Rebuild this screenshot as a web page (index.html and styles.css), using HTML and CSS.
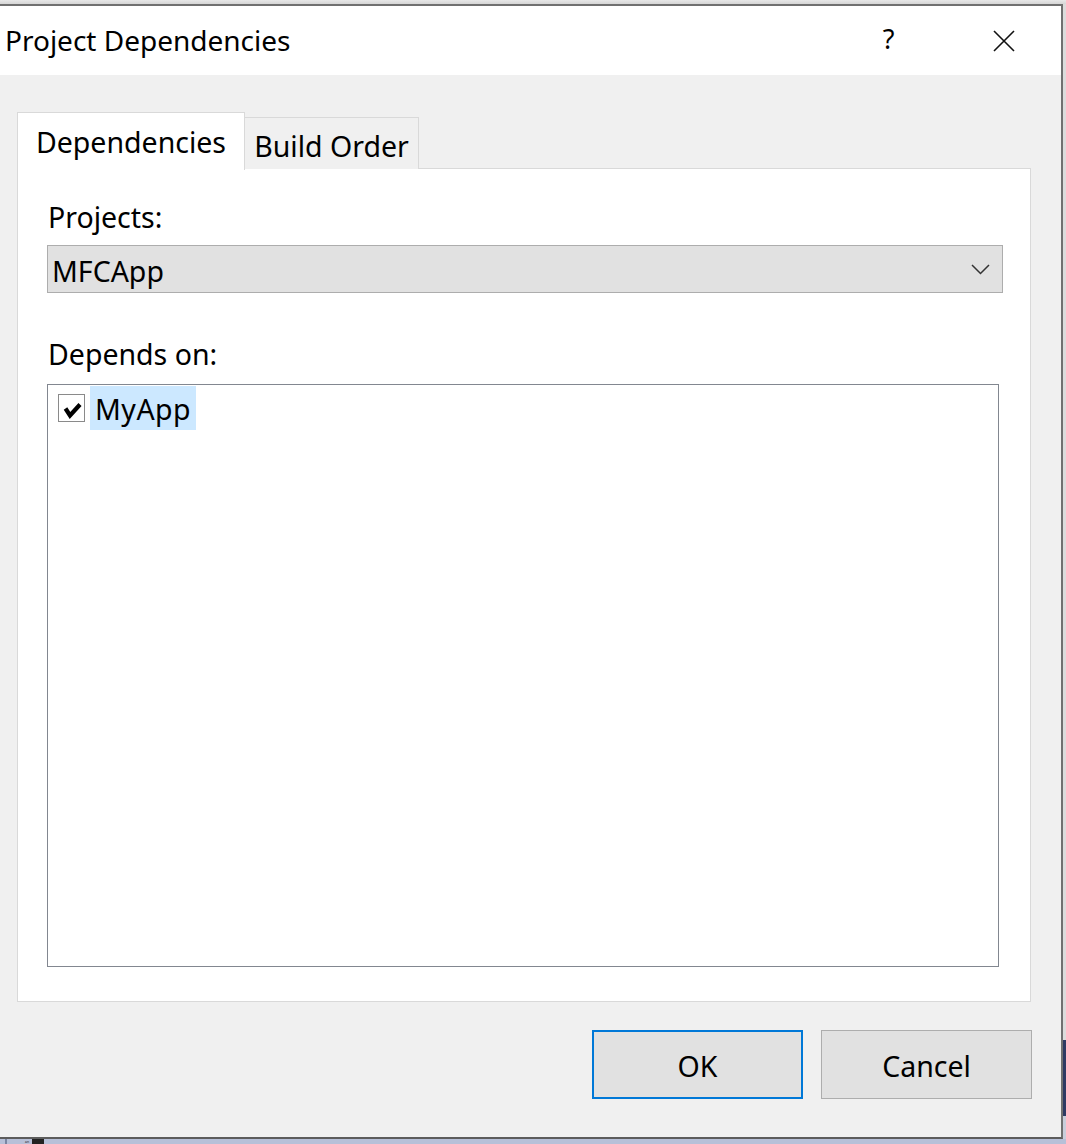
FILE: index.html
```html
<!DOCTYPE html>
<html>
<head>
<meta charset="utf-8">
<link rel="stylesheet" href="styles.css">
</head>
<body>
<div class="screen">
  <div class="top-strip"></div>
  <div class="mid">
    <div class="window">
      <div class="titlebar">
        <div class="title">Project Dependencies</div>
        <div class="caption-btn help">?</div>
        <div class="caption-btn close">
          <svg width="22" height="22" viewBox="0 0 22 22"><path d="M1 1 L21 21 M21 1 L1 21" stroke="#111" stroke-width="1.6" fill="none"/></svg>
        </div>
      </div>
      <div class="client">
        <div class="tabs">
          <div class="tab active">Dependencies</div>
          <div class="tab">Build Order</div>
        </div>
        <div class="panel">
          <div class="label label-projects">Projects:</div>
          <div class="combo">
            <span class="combo-text">MFCApp</span>
            <svg class="chevron" width="19" height="11" viewBox="0 0 19 11"><path d="M1 1 L9.5 9.5 L18 1" stroke="#333" stroke-width="1.5" fill="none"/></svg>
          </div>
          <div class="label label-depends">Depends on:</div>
          <div class="list">
            <div class="list-item">
              <span class="checkbox">
                <svg width="25" height="25" viewBox="0 0 25 25"><path d="M6.5 12.5 L11 19.5 L21 8.5" stroke="#000" stroke-width="4.2" fill="none" stroke-linejoin="miter"/></svg>
              </span>
              <span class="item-text">MyApp</span>
            </div>
          </div>
        </div>
        <div class="buttons">
          <div class="btn default">OK</div>
          <div class="btn">Cancel</div>
        </div>
      </div>
    </div>
    <div class="edge">
      <div class="edge-light"></div>
      <div class="edge-dark"></div>
      <div class="edge-rest"></div>
    </div>
  </div>
  <div class="under">
    <span class="under-line"></span>
    <span class="under-text">an</span>
    <span class="under-square"></span>
  </div>
</div>
</body>
</html>
```

FILE: styles.css
```css
html, body {
  margin: 0;
  padding: 0;
}
body {
  width: 1066px;
  height: 1144px;
  overflow: hidden;
  background: #dcdcdc;
  font-family: "Noto Sans", "Open Sans", sans-serif;
  color: #000;
}
.screen {
  display: flex;
  flex-direction: column;
  height: 1144px;
}
.top-strip {
  height: 4px;
  background: linear-gradient(#e8e8e8, #d6d6d6);
}
.mid {
  display: flex;
  height: 1135px;
}
.window {
  width: 1061px;
  height: 1131px;
  border-top: 2px solid #707070;
  border-right: 2px solid #707070;
  border-bottom: 2px solid #5c5c5c;
  display: flex;
  flex-direction: column;
  background: #f0f0f0;
}
.titlebar {
  height: 69px;
  background: #fff;
  display: flex;
  align-items: center;
}
.title {
  flex: 1;
  padding-left: 5px;
  font-size: 28px;
  padding-bottom: 2px;
}
.caption-btn {
  width: 115px;
  height: 69px;
  display: flex;
  align-items: center;
  justify-content: center;
}
.help {
  font-size: 27px;
  padding-bottom: 4px;
  box-sizing: border-box;
}
.close svg {
  display: block;
}
.client {
  flex: 1;
  padding: 37px 30px 0 17px;
  display: flex;
  flex-direction: column;
  font-size: 28.5px;
}
.tabs {
  display: flex;
  align-items: flex-end;
  height: 57px;
  position: relative;
  z-index: 1;
  margin-bottom: -1px;
}
.tab {
  box-sizing: border-box;
  display: flex;
  align-items: center;
  justify-content: center;
}
.tab.active {
  width: 228px;
  height: 58px;
  background: #fff;
  border: 1px solid #d9d9d9;
  border-bottom: none;
  margin-bottom: -1px;
  padding-bottom: 0;
}
.tab:not(.active) {
  width: 174px;
  height: 52px;
  background: #f0f0f0;
  border-top: 1px solid #d9d9d9;
  border-right: 1px solid #d9d9d9;
  padding-top: 5px;
}
.panel {
  box-sizing: border-box;
  width: 1014px;
  height: 834px;
  background: #fff;
  border: 1px solid #d9d9d9;
  padding: 28px 0 0 29px;
}
.label {
  padding-left: 1px;
  line-height: 40px;
}
.label-projects {
  height: 48px;
}
.combo {
  box-sizing: border-box;
  width: 956px;
  height: 48px;
  background: #e1e1e1;
  border: 1px solid #adadad;
  display: flex;
  align-items: center;
  padding-left: 4px;
  padding-right: 12px;
}
.combo-text {
  flex: 1;
  padding-top: 3px;
}
.chevron {
  display: block;
}
.label-depends {
  margin-top: 41px;
  height: 50px;
}
.list {
  box-sizing: border-box;
  width: 952px;
  height: 583px;
  border: 1px solid #828790;
  background: #fff;
  padding: 1px 0 0 10px;
}
.list-item {
  display: flex;
  align-items: center;
  height: 44px;
}
.checkbox {
  box-sizing: border-box;
  width: 27px;
  height: 28px;
  border: 1px solid #8a8a8a;
  background: #fff;
  display: flex;
  align-items: center;
  justify-content: center;
}
.checkbox svg {
  display: block;
}
.item-text {
  box-sizing: border-box;
  margin-left: 5px;
  height: 44px;
  line-height: 41px;
  padding: 3px 5px 0 5px;
  background: #cce8ff;
  letter-spacing: 0.5px;
}
.buttons {
  display: flex;
  justify-content: flex-end;
  gap: 18px;
  margin-top: 28px;
  margin-right: -1px;
}
.btn {
  box-sizing: border-box;
  width: 211px;
  height: 69px;
  background: #e1e1e1;
  border: 1px solid #adadad;
  display: flex;
  align-items: center;
  justify-content: center;
  padding-top: 2px;
}
.btn.default {
  border: 2px solid #0078d7;
}
.edge {
  flex: 1;
  display: flex;
  flex-direction: column;
}
.edge-light {
  height: 1036px;
  background: #dcdcdc;
}
.edge-dark {
  height: 76px;
  background: #2e3a63;
}
.edge-rest {
  flex: 1;
  background: #c9cedb;
}
.under {
  flex: 1;
  background: #b7c0d8;
  display: flex;
  align-items: center;
  overflow: hidden;
}
.under-line {
  width: 2px;
  height: 5px;
  margin-left: 5px;
  background: #7a86a3;
}
.under-text {
  margin-left: 18px;
  font-size: 3.5px;
  line-height: 3.5px;
  color: #222;
}
.under-square {
  width: 12px;
  height: 5px;
  margin-left: 3px;
  background: #222;
}
```
